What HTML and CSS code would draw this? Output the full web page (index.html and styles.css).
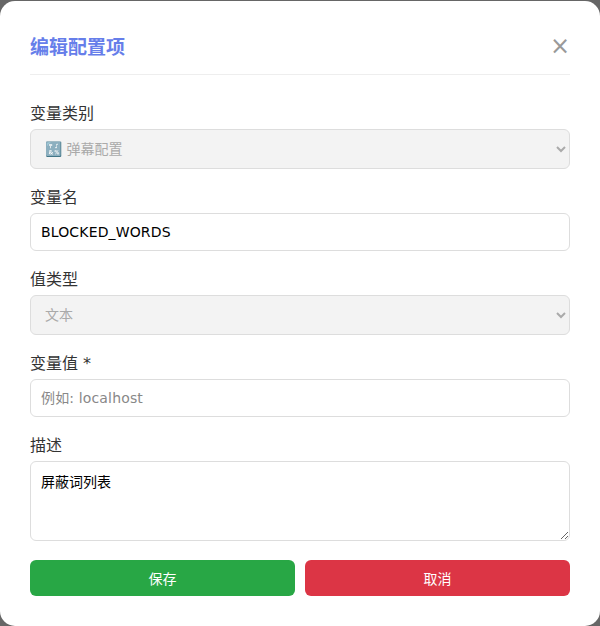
FILE: index.html
```html
<!DOCTYPE html>
<html lang="zh-CN">
<head>
    <meta charset="UTF-8">
    <meta name="viewport" content="width=device-width, initial-scale=1.0">
    <title>编辑配置项</title>
    <link rel="stylesheet" href="styles.css">
</head>
<body>

    <div class="modal">
        <div class="modal-header">
            <h2>编辑配置项</h2>
            <span class="close">&times;</span>
        </div>

        <form class="modal-form">
            <div class="form-group">
                <label for="category">变量类别</label>
                <select id="category" disabled>
                    <option>🔣 弹幕配置</option>
                </select>
            </div>
            <div class="form-group">
                <label for="varName">变量名</label>
                <input type="text" id="varName" value="BLOCKED_WORDS">
            </div>
            <div class="form-group">
                <label for="valueType">值类型</label>
                <select id="valueType" disabled>
                    <option>文本</option>
                </select>
            </div>
            <div class="form-group">
                <label for="varValue">变量值 *</label>
                <input type="text" id="varValue" placeholder="例如: localhost">
            </div>
            <div class="form-group">
                <label for="description">描述</label>
                <textarea id="description">屏蔽词列表</textarea>
            </div>
            <div class="form-actions">
                <button type="button" class="btn btn-save">保存</button>
                <button type="button" class="btn btn-cancel">取消</button>
            </div>
        </form>
    </div>

</body>
</html>
```

FILE: styles.css
```css
* {
    box-sizing: border-box;
}

html,
body {
    height: 100%;
}

body {
    margin: 0;
    padding-top: 1px;
    background-color: #666;
    color: #333;
    font-family: "DejaVu Sans", "Noto Sans CJK SC", sans-serif;
    overflow: hidden;
}

.modal {
    height: 625px;
    padding: 20px 30px 30px;
    background-color: #fff;
    border-radius: 15px;
}

.modal-header {
    display: flex;
    justify-content: space-between;
    align-items: center;
    height: 54px;
    margin-bottom: 26px;
    padding-bottom: 4px;
    border-bottom: 1px solid #eee;
}

.modal-header h2 {
    margin: 0;
    font-size: 19px;
    color: #667eea;
}

.close {
    font-size: 24px;
    line-height: 1;
    color: #999;
    cursor: pointer;
}

.form-group {
    margin-bottom: 16px;
}

.form-group label {
    display: block;
    height: 25px;
    margin-bottom: 3px;
    font-size: 16px;
    line-height: 25px;
}

.form-group input,
.form-group select,
.form-group textarea {
    display: block;
    width: 100%;
    padding: 10px;
    font-family: inherit;
    font-size: 14px;
    color: #000;
    background-color: #fff;
    border: 1px solid #ddd;
    border-radius: 6px;
}

.form-group input {
    height: 38px;
    letter-spacing: 0.15px;
}

.form-group input::placeholder {
    color: #888;
}

.form-group select {
    height: 40px;
}

.form-group select:disabled {
    background-color: #f3f3f3;
    color: #aaa;
    opacity: 1;
}

.form-group textarea {
    height: 80px;
    padding-top: 9px;
    resize: vertical;
}

.form-actions {
    display: flex;
    gap: 10px;
    margin-top: 19px;
}

.btn {
    flex: 1;
    height: 36px;
    font-family: inherit;
    font-size: 14px;
    color: #fff;
    border: none;
    border-radius: 6px;
    cursor: pointer;
}

.btn-save {
    background-color: #28a745;
}

.btn-cancel {
    background-color: #dc3545;
}
```
